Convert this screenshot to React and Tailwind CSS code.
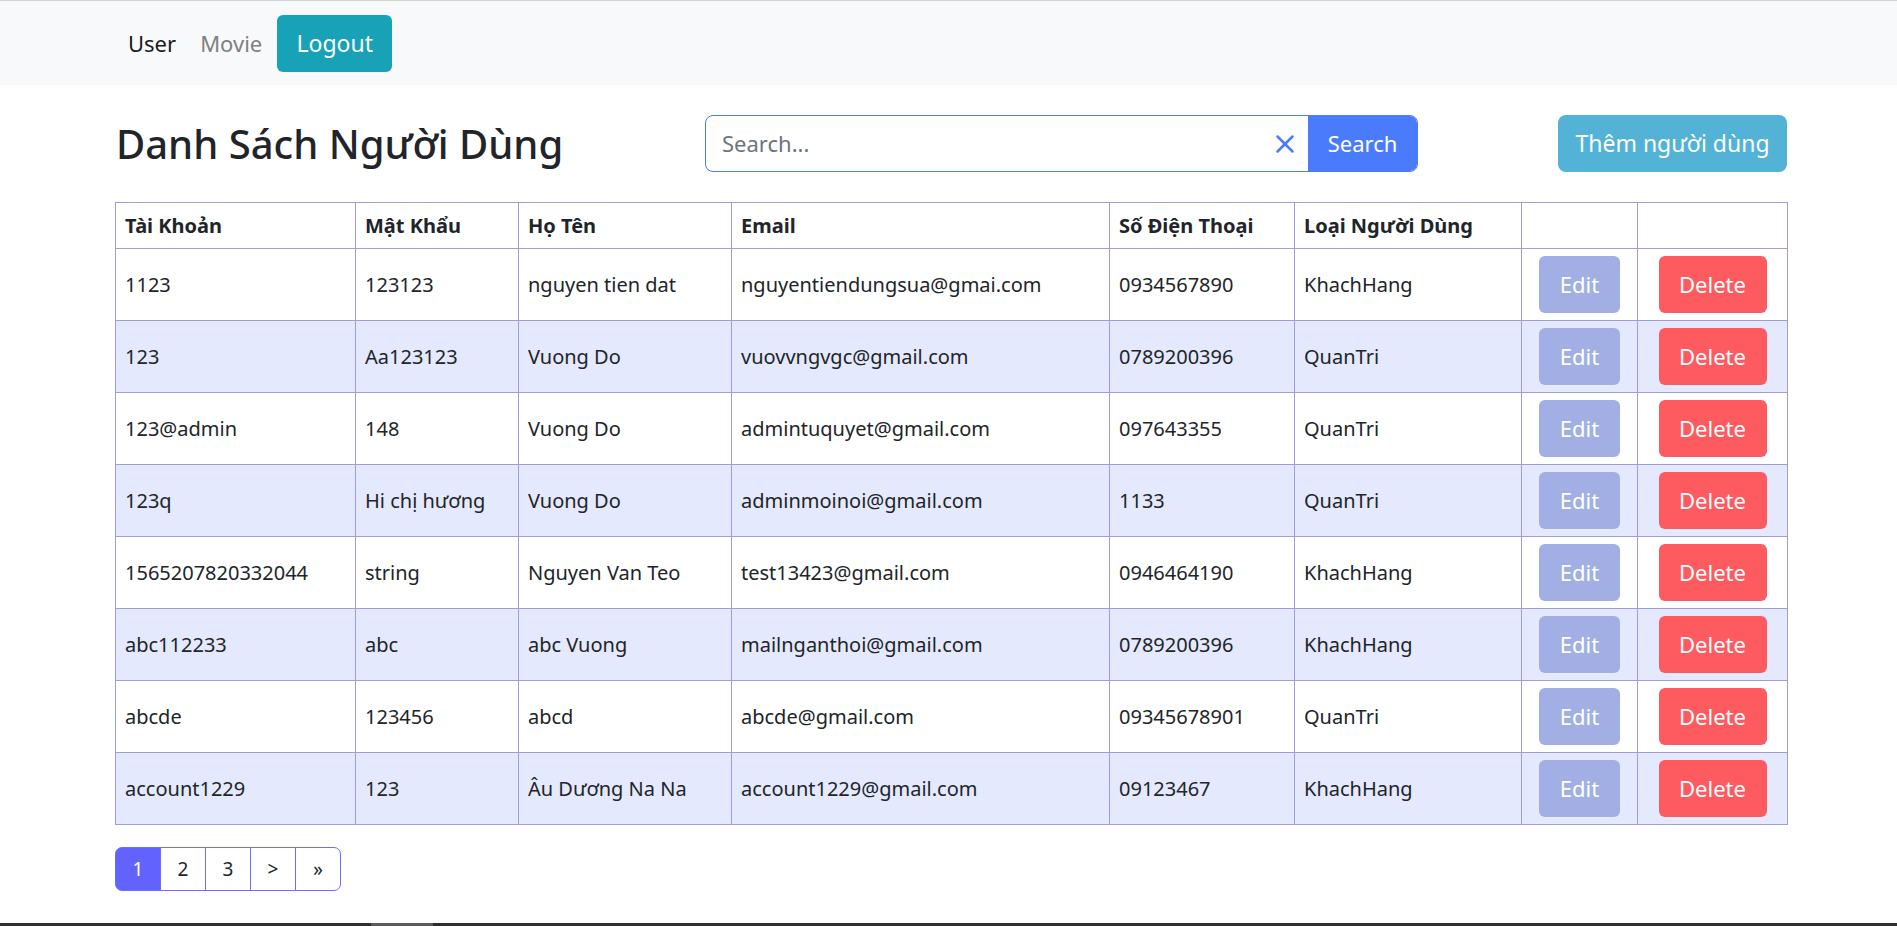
import { X } from "lucide-react";

const users = [
  ["1123", "123123", "nguyen tien dat", "nguyentiendungsua@gmai.com", "0934567890", "KhachHang"],
  ["123", "Aa123123", "Vuong Do", "vuovvngvgc@gmail.com", "0789200396", "QuanTri"],
  ["123@admin", "148", "Vuong Do", "admintuquyet@gmail.com", "097643355", "QuanTri"],
  ["123q", "Hi chị hương", "Vuong Do", "adminmoinoi@gmail.com", "1133", "QuanTri"],
  ["1565207820332044", "string", "Nguyen Van Teo", "test13423@gmail.com", "0946464190", "KhachHang"],
  ["abc112233", "abc", "abc Vuong", "mailnganthoi@gmail.com", "0789200396", "KhachHang"],
  ["abcde", "123456", "abcd", "abcde@gmail.com", "09345678901", "QuanTri"],
  ["account1229", "123", "Âu Dương Na Na", "account1229@gmail.com", "09123467", "KhachHang"],
];

const columns = [
  { label: "Tài Khoản", w: "w-[240px]" },
  { label: "Mật Khẩu", w: "w-[163px]" },
  { label: "Họ Tên", w: "w-[213px]" },
  { label: "Email", w: "w-[378px]" },
  { label: "Số Điện Thoại", w: "w-[185px]" },
  { label: "Loại Người Dùng", w: "w-[227px]" },
  { label: "", w: "w-[116px]" },
  { label: "", w: "w-[150px]" },
];

function Navbar() {
  return (
    <nav className="flex h-[85px] items-center border-t border-[#d4d4d4] bg-[#f8f9fa] pl-[116px] text-[22px]">
      <a className="px-[12px] text-[#1a1a1a]">User</a>
      <a className="pl-[12px] pr-[15px] text-[#808080]">Movie</a>
      <button
        type="button"
        className="flex h-[57px] w-[115px] items-center justify-center rounded-[6px] bg-[#17a2b8] text-[23px] text-white"
      >
        Logout
      </button>
    </nav>
  );
}

function SearchBox() {
  return (
    <div className="flex h-[57px] w-[713px] overflow-hidden rounded-[8px] border border-[#4a7cff] bg-white">
      <input
        type="text"
        placeholder="Search..."
        className="min-w-0 flex-1 pl-[16px] text-[22px] text-[#212529] outline-none placeholder:text-[#6c757d]"
      />
      <span className="flex w-[46px] items-center justify-center text-[#4b7bfd]">
        <X size={30} strokeWidth={2} aria-hidden />
      </span>
      <button
        type="button"
        className="w-[109px] bg-[#4b7bfd] text-[22px] text-white"
      >
        Search
      </button>
    </div>
  );
}

function UserRow({ row, index }) {
  const striped = index % 2 === 1;
  return (
    <tr className={`h-[72px] ${striped ? "bg-[#e5e9fd]" : "bg-white"}`}>
      {row.map((cell, i) => (
        <td key={i} className="truncate border border-[#a19dd9] px-[9px] align-middle">
          {cell}
        </td>
      ))}
      <td className="border border-[#a19dd9] text-center align-middle">
        <button
          type="button"
          className="h-[57px] w-[81px] rounded-[6px] bg-[#a2afe4] text-[22px] text-white"
        >
          Edit
        </button>
      </td>
      <td className="border border-[#a19dd9] text-center align-middle">
        <button
          type="button"
          className="h-[57px] w-[108px] rounded-[6px] bg-[#fe5b61] text-[22px] text-white"
        >
          Delete
        </button>
      </td>
    </tr>
  );
}

function Pagination() {
  const items = ["1", "2", "3", ">", "»"];
  return (
    <div className="mt-[22px] flex">
      {items.map((it, i) => {
        const active = i === 0;
        const first = i === 0;
        const last = i === items.length - 1;
        return (
          <span
            key={it}
            className={`flex h-[44px] w-[46px] items-center justify-center border border-[#6d6dff] text-[19px] ${
              i > 0 ? "-ml-px" : ""
            } ${first ? "rounded-l-[7px]" : ""} ${last ? "rounded-r-[7px]" : ""} ${
              active ? "bg-[#6262ff] text-white" : "bg-white text-[#212529]"
            }`}
          >
            {it}
          </span>
        );
      })}
    </div>
  );
}

export default function App() {
  return (
    <div className="min-h-[926px] bg-white font-['Noto_Sans',sans-serif] text-[20px] text-[#212529]">
      <Navbar />
      <main className="ml-[115px] w-[1672px]">
        <div className="mt-[30px] flex h-[57px] items-center">
          <h2 className="w-[590px] pl-px text-[40px] font-medium text-[#212529]">
            Danh Sách Người Dùng
          </h2>
          <SearchBox />
          <button
            type="button"
            className="ml-auto h-[57px] w-[229px] rounded-[8px] bg-[#52b3d7] text-[23px] text-white"
          >
            Thêm người dùng
          </button>
        </div>

        <table className="mt-[30px] w-[1672px] table-fixed border-collapse">
          <thead>
            <tr className="h-[46px]">
              {columns.map((c, i) => (
                <th
                  key={i}
                  className={`${c.w} border border-[#a19dd9] px-[9px] text-left align-middle font-bold`}
                >
                  {c.label}
                </th>
              ))}
            </tr>
          </thead>
          <tbody>
            {users.map((row, i) => (
              <UserRow key={row[0]} row={row} index={i} />
            ))}
          </tbody>
        </table>

        <Pagination />
      </main>
      <div className="fixed bottom-0 left-0 right-0 flex h-[3px] bg-[#2f2f2f]">
        <div className="ml-[371px] w-[62px] bg-[#5a5a5a]" />
      </div>
    </div>
  );
}
